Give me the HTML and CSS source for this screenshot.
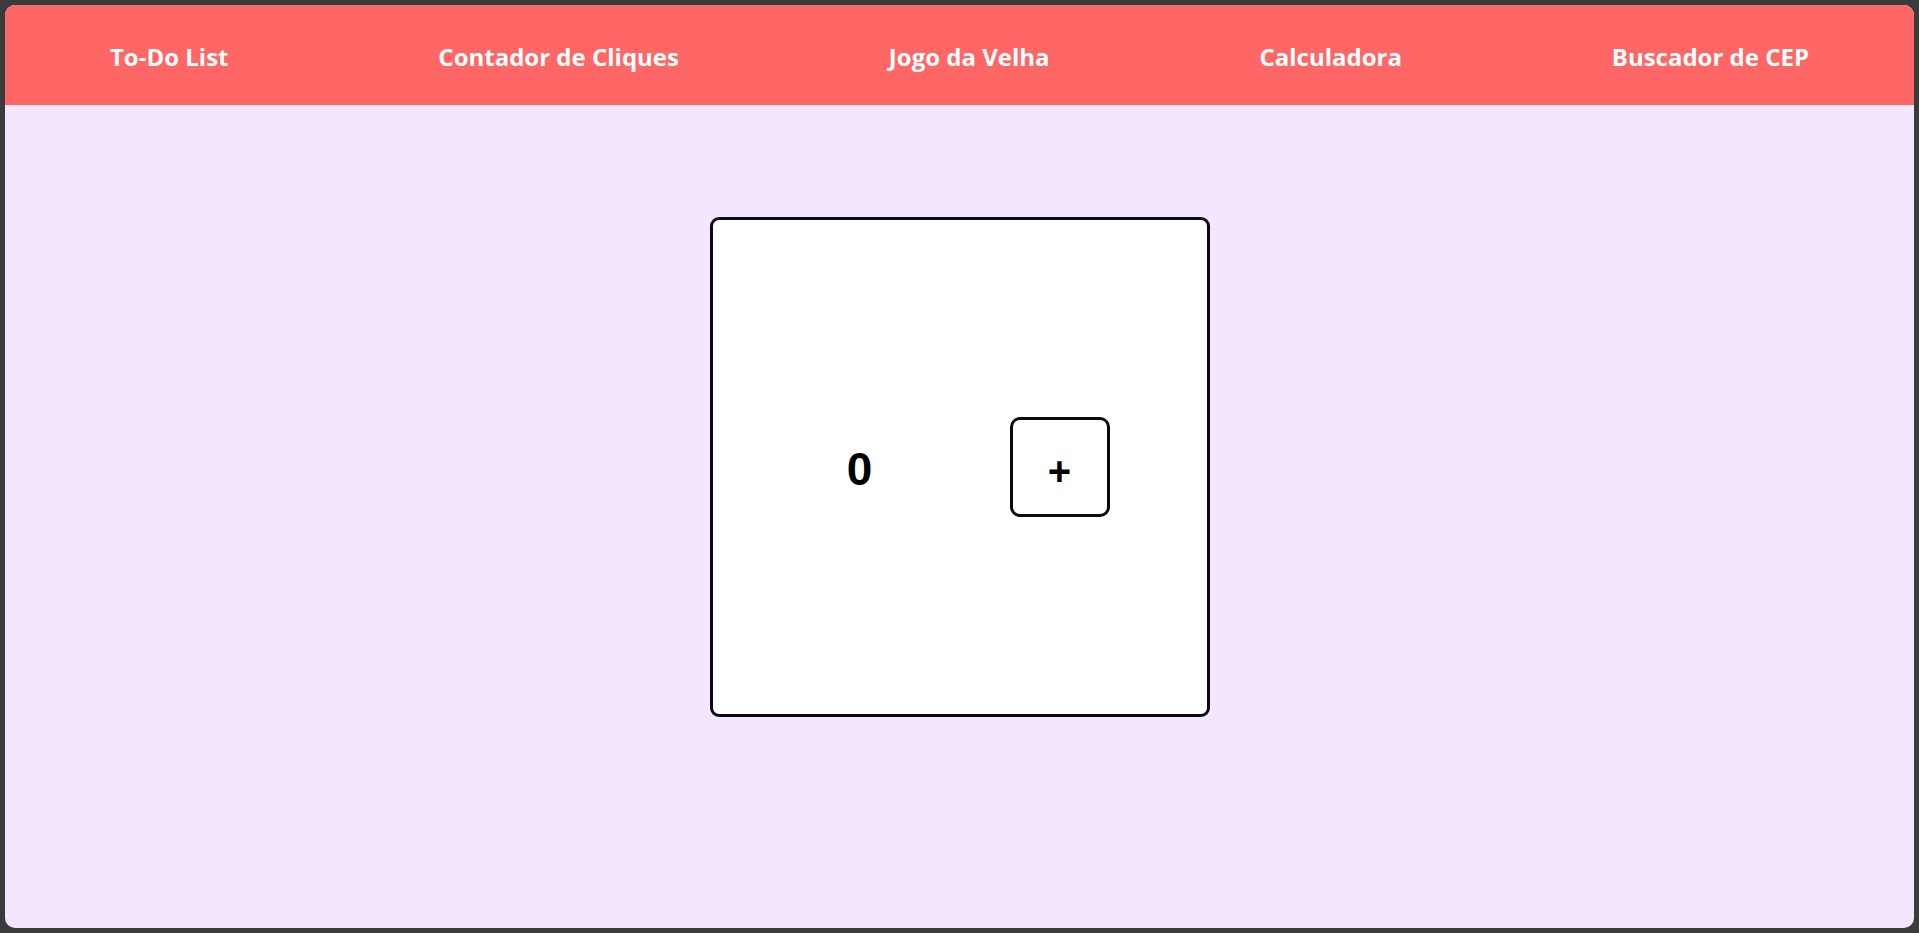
FILE: index.html
```html
<!DOCTYPE html>
<html lang="pt-BR">
<head>
<meta charset="utf-8">
<title>Contador de Cliques</title>
<link rel="stylesheet" href="styles.css">
</head>
<body>
<div class="app">
  <nav class="nav">
    <a class="nav-link" href="#">To-Do List</a>
    <a class="nav-link" href="#">Contador de Cliques</a>
    <a class="nav-link" href="#">Jogo da Velha</a>
    <a class="nav-link" href="#">Calculadora</a>
    <a class="nav-link" href="#">Buscador de CEP</a>
  </nav>
  <main class="main">
    <div class="card">
      <span class="count">0</span>
      <button class="btn" type="button">+</button>
    </div>
  </main>
</div>
</body>
</html>
```
FILE: styles.css
```css
html, body {
  height: 100%;
}
body {
  margin: 0;
  padding: 5px;
  box-sizing: border-box;
  background: #3b3b3b;
}
.app {
  height: 100%;
  border-radius: 10px;
  overflow: hidden;
  background: #f4e6ff;
  display: flex;
  flex-direction: column;
}
.nav {
  height: 100px;
  flex: none;
  background: #ff6666;
  display: flex;
  justify-content: space-around;
  align-items: center;
}
.nav-link {
  color: #ffffff;
  text-decoration: none;
  font-family: "Open Sans", "Noto Sans", sans-serif;
  font-weight: 700;
  font-size: 24px;
  padding-top: 3px;
}
.main {
  flex: 1;
  display: flex;
  justify-content: center;
  align-items: flex-start;
  padding-top: 112px;
}
.card {
  width: 500px;
  height: 500px;
  box-sizing: border-box;
  border: 3px solid #0a0a14;
  border-radius: 9px;
  background: #ffffff;
  display: flex;
  align-items: center;
  justify-content: center;
  gap: 100px;
}
.count {
  width: 100px;
  text-align: center;
  font-family: "Liberation Sans", Arial, sans-serif;
  font-weight: 700;
  font-size: 46px;
  color: #000;
  padding-top: 4px;
}
.btn {
  width: 100px;
  height: 100px;
  box-sizing: border-box;
  border: 3px solid #0a0a14;
  border-radius: 10px;
  background: #ffffff;
  color: #000;
  font-family: "Liberation Sans", Arial, sans-serif;
  font-weight: 700;
  font-size: 40px;
  line-height: 1;
  padding: 8px 0 0 0;
  cursor: pointer;
}
```
